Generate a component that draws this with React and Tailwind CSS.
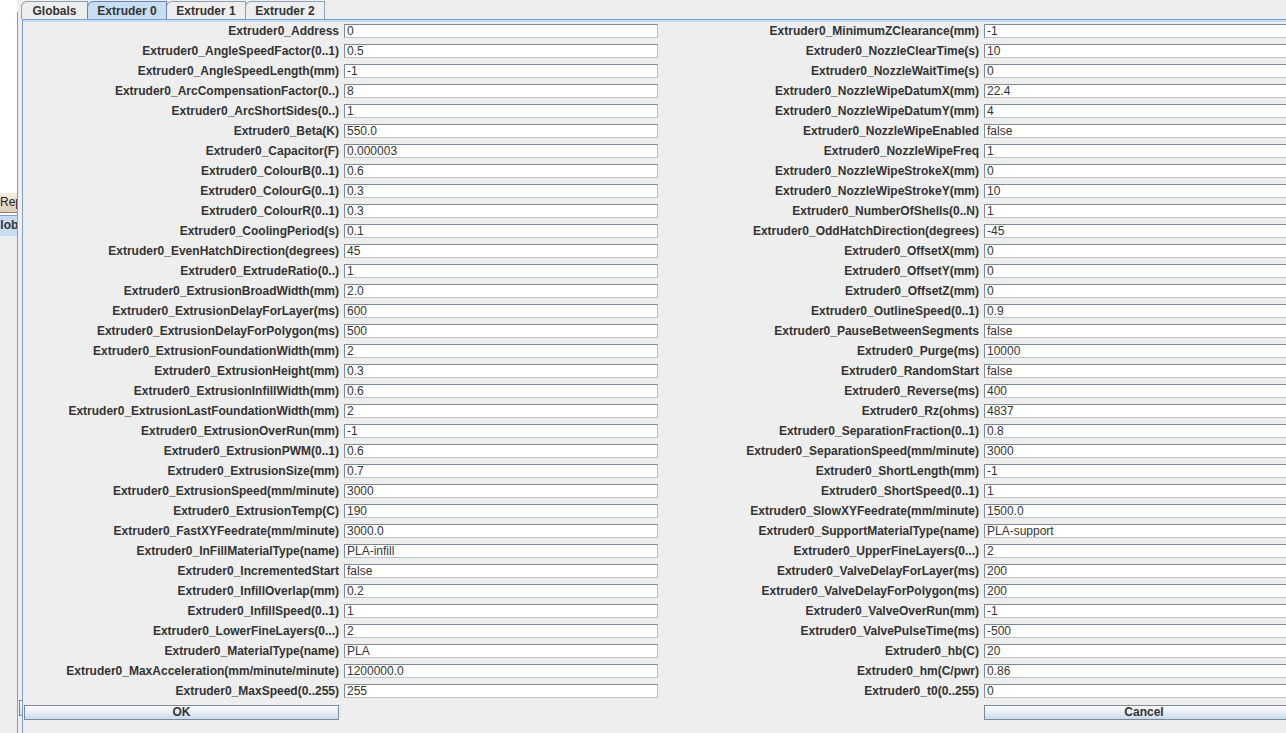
import React from 'react';

const left = [
    ['Extruder0_Address', '0'],
    ['Extruder0_AngleSpeedFactor(0..1)', '0.5'],
    ['Extruder0_AngleSpeedLength(mm)', '-1'],
    ['Extruder0_ArcCompensationFactor(0..)', '8'],
    ['Extruder0_ArcShortSides(0..)', '1'],
    ['Extruder0_Beta(K)', '550.0'],
    ['Extruder0_Capacitor(F)', '0.000003'],
    ['Extruder0_ColourB(0..1)', '0.6'],
    ['Extruder0_ColourG(0..1)', '0.3'],
    ['Extruder0_ColourR(0..1)', '0.3'],
    ['Extruder0_CoolingPeriod(s)', '0.1'],
    ['Extruder0_EvenHatchDirection(degrees)', '45'],
    ['Extruder0_ExtrudeRatio(0..)', '1'],
    ['Extruder0_ExtrusionBroadWidth(mm)', '2.0'],
    ['Extruder0_ExtrusionDelayForLayer(ms)', '600'],
    ['Extruder0_ExtrusionDelayForPolygon(ms)', '500'],
    ['Extruder0_ExtrusionFoundationWidth(mm)', '2'],
    ['Extruder0_ExtrusionHeight(mm)', '0.3'],
    ['Extruder0_ExtrusionInfillWidth(mm)', '0.6'],
    ['Extruder0_ExtrusionLastFoundationWidth(mm)', '2'],
    ['Extruder0_ExtrusionOverRun(mm)', '-1'],
    ['Extruder0_ExtrusionPWM(0..1)', '0.6'],
    ['Extruder0_ExtrusionSize(mm)', '0.7'],
    ['Extruder0_ExtrusionSpeed(mm/minute)', '3000'],
    ['Extruder0_ExtrusionTemp(C)', '190'],
    ['Extruder0_FastXYFeedrate(mm/minute)', '3000.0'],
    ['Extruder0_InFillMaterialType(name)', 'PLA-infill'],
    ['Extruder0_IncrementedStart', 'false'],
    ['Extruder0_InfillOverlap(mm)', '0.2'],
    ['Extruder0_InfillSpeed(0..1)', '1'],
    ['Extruder0_LowerFineLayers(0...)', '2'],
    ['Extruder0_MaterialType(name)', 'PLA'],
    ['Extruder0_MaxAcceleration(mm/minute/minute)', '1200000.0'],
    ['Extruder0_MaxSpeed(0..255)', '255'],
];

const right = [
    ['Extruder0_MinimumZClearance(mm)', '-1'],
    ['Extruder0_NozzleClearTime(s)', '10'],
    ['Extruder0_NozzleWaitTime(s)', '0'],
    ['Extruder0_NozzleWipeDatumX(mm)', '22.4'],
    ['Extruder0_NozzleWipeDatumY(mm)', '4'],
    ['Extruder0_NozzleWipeEnabled', 'false'],
    ['Extruder0_NozzleWipeFreq', '1'],
    ['Extruder0_NozzleWipeStrokeX(mm)', '0'],
    ['Extruder0_NozzleWipeStrokeY(mm)', '10'],
    ['Extruder0_NumberOfShells(0..N)', '1'],
    ['Extruder0_OddHatchDirection(degrees)', '-45'],
    ['Extruder0_OffsetX(mm)', '0'],
    ['Extruder0_OffsetY(mm)', '0'],
    ['Extruder0_OffsetZ(mm)', '0'],
    ['Extruder0_OutlineSpeed(0..1)', '0.9'],
    ['Extruder0_PauseBetweenSegments', 'false'],
    ['Extruder0_Purge(ms)', '10000'],
    ['Extruder0_RandomStart', 'false'],
    ['Extruder0_Reverse(ms)', '400'],
    ['Extruder0_Rz(ohms)', '4837'],
    ['Extruder0_SeparationFraction(0..1)', '0.8'],
    ['Extruder0_SeparationSpeed(mm/minute)', '3000'],
    ['Extruder0_ShortLength(mm)', '-1'],
    ['Extruder0_ShortSpeed(0..1)', '1'],
    ['Extruder0_SlowXYFeedrate(mm/minute)', '1500.0'],
    ['Extruder0_SupportMaterialType(name)', 'PLA-support'],
    ['Extruder0_UpperFineLayers(0...)', '2'],
    ['Extruder0_ValveDelayForLayer(ms)', '200'],
    ['Extruder0_ValveDelayForPolygon(ms)', '200'],
    ['Extruder0_ValveOverRun(mm)', '-1'],
    ['Extruder0_ValvePulseTime(ms)', '-500'],
    ['Extruder0_hb(C)', '20'],
    ['Extruder0_hm(C/pwr)', '0.86'],
    ['Extruder0_t0(0..255)', '0'],
];

const tabs = ['Globals', 'Extruder 0', 'Extruder 1', 'Extruder 2'];

const Field = ({ value }) => (
    <div className="h-[14px] w-full bg-white border border-[#7a8a99] border-r-[#b8c4d0] border-b-[#b8c4d0] text-[12px] leading-[12px] pl-[2px] text-[#333333] overflow-hidden whitespace-nowrap">
        {value}
    </div>
);

const Label = ({ text }) => (
    <div className="pr-[5px] text-right text-[12px] font-bold text-[#333333] whitespace-nowrap">{text}</div>
);

const Button = ({ children }) => (
    <button className="h-[15px] w-full border border-[#7a8a99] bg-gradient-to-b from-[#fbfdff] via-[#e6eef7] to-[#c9dbee] text-[12px] leading-[12px] font-bold text-[#333333]">
        {children}
    </button>
);

export default function App() {
    return (
        <div className="w-[1286px] h-[733px] overflow-hidden bg-[#eeeeee] flex font-['Liberation_Sans',Arial,sans-serif]">
            {/* window behind */}
            <div className="w-[17px] shrink-0 flex flex-col overflow-hidden">
                <div className="h-[193px] bg-white" />
                <div className="h-[19px] bg-gradient-to-b from-[#f4ede2] to-[#dccdb8] text-[12px] leading-[19px] text-[#222] whitespace-nowrap">Rep</div>
                <div className="h-[1px] bg-[#8a7e70]" />
                <div className="h-[2px] bg-white" />
                <div className="h-[21px] bg-[#c8ddf2] border-t border-[#7b9ed3] text-[12px] leading-[18px] font-bold text-[#333] whitespace-nowrap -ml-[9px]">Globi</div>
                <div className="flex-1 bg-[#eeeeee]" />
            </div>
            <div className="w-[1px] shrink-0 bg-[#7b9ed3] mt-[12px]" />
            <div className="w-[4px] shrink-0 flex flex-col">
                <div className="h-[700px]" />
                <div className="ml-[1px] h-[16px] border border-r-0 border-[#7a8a99] bg-gradient-to-b from-[#fbfdff] to-[#c9dbee]" />
            </div>
            {/* main tabbed pane */}
            <div className="flex-1 min-w-0 flex flex-col">
                <div className="h-[19px] flex items-end -ml-[1px]">
                    {tabs.map((t, i) => (
                        <div
                            key={t}
                            className={`h-[18px] flex items-center justify-center text-[12px] font-bold text-[#333333] border border-b-0 rounded-tl-[6px] ${i === 0 ? 'w-[67px]' : 'w-[80px] -ml-[1px]'} ${i === 1 ? 'bg-[#c8ddf2] border-[#6382bf] z-10' : 'bg-[#eeeeee] border-[#8da0b5]'}`}
                        >
                            {t}
                        </div>
                    ))}
                </div>
                <div className="flex-1 flex flex-col border-l border-t border-[#7b9ed3]">
                    <div className="h-[2px] bg-[#c8ddf2]" />
                    <div className="grid grid-cols-[321px_314px_326px_320px] auto-rows-[20px] items-center -mt-[1px]">
                        {left.map((l, i) => (
                            <React.Fragment key={l[0]}>
                                <Label text={l[0]} />
                                <Field value={l[1]} />
                                <Label text={right[i][0]} />
                                <Field value={right[i][1]} />
                            </React.Fragment>
                        ))}
                        <div className="pr-[5px] pl-[1px]"><Button>OK</Button></div>
                        <div />
                        <div />
                        <div><Button>Cancel</Button></div>
                    </div>
                </div>
            </div>
        </div>
    );
}
